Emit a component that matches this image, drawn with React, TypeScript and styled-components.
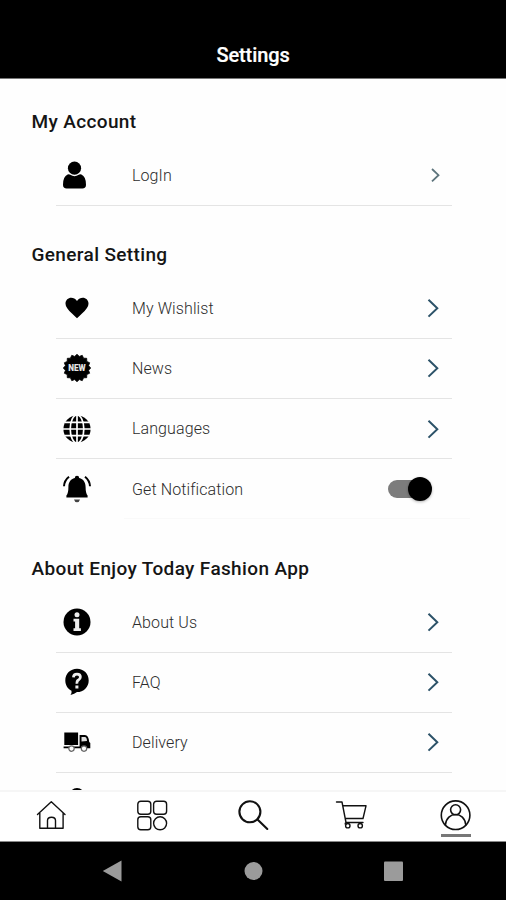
import React from "react";
import styled, { createGlobalStyle } from "styled-components";

const GlobalStyle = createGlobalStyle`
  * { box-sizing: border-box; }
  body { margin: 0; background: #fefefe; font-family: Roboto, "Liberation Sans", sans-serif; }
`;

const Screen = styled.div`
  display: flex;
  flex-direction: column;
  height: 900px;
  overflow: hidden;
  background: #fefefe;
`;

const Header = styled.header`
  flex: none;
  height: 79px;
  padding-top: 43px;
  background: #000;
  border-bottom: 1px solid #777;
  color: #fff;
  font-size: 20px;
  font-weight: 500;
  line-height: 24px;
  letter-spacing: -0.1px;
  text-align: center;
  -webkit-text-stroke: 0.2px #fff;
`;

const Content = styled.main`
  flex: 1;
  min-height: 0;
  overflow: hidden;
  padding-top: 31px;
`;

const Section = styled.section`
  margin-bottom: 37.5px;
`;

const Title = styled.h2`
  margin: 0 0 11.5px 31.5px;
  font-size: 19px;
  font-weight: 500;
  line-height: 24px;
  letter-spacing: 0.36px;
  color: #151515;
`;

const Row = styled.div<{ $line?: boolean }>`
  display: flex;
  align-items: center;
  width: 396px;
  height: 60.18px;
  margin-left: 56px;
  padding: 0 10px 0 6px;
  border-bottom: ${(p) => (p.$line === false ? "0" : "1px solid #e4e4e4")};
`;

const FaintLine = styled.div`
  height: 1px;
  margin: -1px 36px 0 124px;
  background: #f9f9f9;
`;

const Icon = styled.svg`
  flex: none;
  width: 30px;
  height: 30px;
  margin-right: 40px;
`;

const Label = styled.span`
  flex: 1;
  padding-top: 1.4px;
  font-size: 16px;
  font-weight: 300;
  line-height: 22px;
  letter-spacing: 0.1px;
  color: #2c2c2c;
`;

const Arrow = styled.svg<{ $small?: boolean }>`
  flex: none;
  width: 20px;
  height: 20px;
  stroke: ${(p) => (p.$small ? "#5d747c" : "#2c5268")};
`;

const Switch = styled.div`
  position: relative;
  width: 39px;
  height: 18px;
  margin-right: 15px;
  border-radius: 9px;
  background: #7c7c7c;
`;

const Thumb = styled.div`
  position: absolute;
  right: -5px;
  top: -3px;
  width: 24px;
  height: 24px;
  border-radius: 50%;
  background: #000;
  box-shadow: 0 1px 3px rgba(0, 0, 0, 0.3);
`;

const TabBar = styled.nav`
  flex: none;
  display: grid;
  grid-template-columns: repeat(5, 1fr);
  height: 52px;
  padding-top: 8px;
  border-top: 2px solid #f6f6f6;
  border-bottom: 1px solid #888;
  background: #fff;
`;

const Tab = styled.div`
  display: flex;
  flex-direction: column;
  align-items: center;
  gap: 3px;
`;

const TabIcon = styled.svg<{ $stroke?: number }>`
  width: 32px;
  height: 31px;
  overflow: visible;
  fill: none;
  stroke: #111;
  stroke-width: ${(p) => p.$stroke ?? 1.4};
  stroke-linejoin: round;
  stroke-linecap: round;
`;

const Underline = styled.div`
  width: 30px;
  height: 3px;
  margin-left: 1px;
  background: #777;
`;

const SystemBar = styled.footer`
  flex: none;
  display: grid;
  grid-template-columns: 182px 142px 182px;
  height: 58px;
  padding-top: 18px;
  background: #000;
`;

const SystemKey = styled.svg<{ $align: "start" | "center" | "end" }>`
  width: 22px;
  height: 24px;
  justify-self: ${(p) => p.$align};
  margin-left: ${(p) => (p.$align === "start" ? "58px" : "0")};
  margin-right: ${(p) => (p.$align === "end" ? "58px" : "0")};
  fill: #9b9b9b;
`;

const Chevron = ({ small }: { small?: boolean }) => (
  <Arrow viewBox="0 0 20 20" fill="none" strokeWidth={small ? 1.8 : 2} $small={small}>
    <path d={small ? "M10 4l6.5 6.2L10 16.4" : "M6.5 1.8l8.8 8.4-8.8 8.4"} />
  </Arrow>
);

const starburst = Array.from({ length: 32 }, (_, i) => {
  const r = i % 2 ? 11.8 : 13.7;
  const a = (i * Math.PI) / 16;
  return `${(15 + r * Math.cos(a)).toFixed(2)},${(15 + r * Math.sin(a)).toFixed(2)}`;
}).join(" ");

const UserIcon = () => (
  <Icon viewBox="0 0 30 30">
    <circle cx="12.5" cy="8.2" r="6.6" />
    <path d="M5.6 14.6q1.5-.7 2.7.2q4.2 2.8 8.4 0q1.2-.9 2.7-.2q4.6 2.1 4.6 10.1q0 3.8-3.7 3.8H4.7Q1 28.5 1 24.7q0-8 4.6-10.1z" />
  </Icon>
);

const HeartIcon = () => (
  <Icon viewBox="0 0 30 30">
    <path d="M15 25.3Q12.8 23.4 10 20.6Q3.5 14.5 3.5 10.7C3.5 4.3 11.3 2.6 15 8C18.7 2.6 26.5 4.3 26.5 10.7Q26.5 14.5 20 20.6Q17.2 23.4 15 25.3z" />
  </Icon>
);

const NewIcon = () => (
  <Icon viewBox="0 0 30 30">
    <polygon points={starburst} stroke="#000" strokeWidth=".8" strokeLinejoin="round" />
    <text
      x="15"
      y="18.3"
      textAnchor="middle"
      fontFamily="Roboto"
      fontSize="9"
      fontWeight="900"
      fill="#e4e4e4"
      textLength="17.5"
      lengthAdjust="spacingAndGlyphs"
    >
      NEW
    </text>
  </Icon>
);

const GlobeIcon = () => (
  <Icon viewBox="0 0 30 30">
    <circle cx="15" cy="15" r="13.6" />
    <g fill="none" stroke="#fff" strokeWidth="1.7">
      <path d="M15 1v28M1 15h28M3 8.3h24M3 21.7h24" />
      <ellipse cx="15" cy="15" rx="6.8" ry="14" />
    </g>
  </Icon>
);

const BellIcon = () => (
  <Icon viewBox="0 0 30 30">
    <path d="M15 1.7q2.2 0 2.2 2.3C21.5 5 23.6 8.5 23.6 13q0 6.5 2 8.5v2H4.4v-2q2-2 2-8.5C6.4 8.5 8.5 5 12.8 4Q12.8 1.7 15 1.7z" />
    <path d="M12 25.4h6Q17.3 28.2 15 28.2T12 25.4z" fill="#444" />
    <path d="M7 2.8Q2.3 6.5 2 12.3M23 2.8Q27.7 6.5 28 12.3" fill="none" stroke="#000" strokeWidth="2" />
  </Icon>
);

const InfoIcon = () => (
  <Icon viewBox="0 0 30 30">
    <circle cx="15" cy="15" r="13.5" />
    <circle cx="15" cy="7.7" r="2.5" fill="#eee" />
    <path d="M11.5 11.7h5.7v9.5h1.7v2.7h-7.4v-2.7h1.6v-6.7h-1.6z" fill="#eee" />
  </Icon>
);

const FaqIcon = () => (
  <Icon viewBox="0 0 30 30">
    <path d="M15 1.8C8.3 1.8 3.3 6.9 3.3 13.4c0 4.6 2.5 8.3 6.2 10.3q.5 2-1 4.2q4-.5 6.5-2.8C21.7 25.1 26.7 20 26.7 13.4S21.7 1.8 15 1.8z" />
    <path d="M11.4 10.3Q11.6 7.2 15 7.2t3.4 2.9Q18.4 12 16.5 13T15 16.7" fill="none" stroke="#eee" strokeWidth="2.7" />
    <rect x="13.4" y="18.5" width="3" height="3" fill="#eee" />
  </Icon>
);

const TruckIcon = () => (
  <Icon viewBox="0 0 30 30">
    <path d="M2.3 5.6h13.8v12.5H2.3zM1.6 19.5h16V8.1h5.3q3.7 0 4.3 7l1.1.8v5.4H1.6z" />
    <path d="M19.5 10.1h3.3q2 0 2.2 4l-5.5.5z" fill="#ddd" />
    <g fill="#fff" stroke="#666" strokeWidth="1.2">
      <circle cx="9.5" cy="21.6" r="2.7" />
      <circle cx="22" cy="21.6" r="2.7" />
    </g>
  </Icon>
);

const RoundIcon = () => (
  <Icon viewBox="0 0 30 30">
    <circle cx="15" cy="8.7" r="7.7" />
  </Icon>
);

type Item = { label: string; icon: React.FC; small?: boolean; toggle?: boolean };

const sections: { title: string; items: Item[] }[] = [
  { title: "My Account", items: [{ label: "LogIn", icon: UserIcon, small: true }] },
  {
    title: "General Setting",
    items: [
      { label: "My Wishlist", icon: HeartIcon },
      { label: "News", icon: NewIcon },
      { label: "Languages", icon: GlobeIcon },
      { label: "Get Notification", icon: BellIcon, toggle: true },
    ],
  },
  {
    title: "About Enjoy Today Fashion App",
    items: [
      { label: "About Us", icon: InfoIcon },
      { label: "FAQ", icon: FaqIcon },
      { label: "Delivery", icon: TruckIcon },
      { label: "", icon: RoundIcon },
    ],
  },
];

export default function App() {
  return (
    <>
      <GlobalStyle />
      <Screen>
        <Header>Settings</Header>
        <Content>
          {sections.map((section) => (
            <Section key={section.title}>
              <Title>{section.title}</Title>
              {section.items.map(({ label, icon: Glyph, small, toggle }) => (
                <React.Fragment key={label}>
                  <Row $line={!toggle}>
                    <Glyph />
                    <Label>{label}</Label>
                    {toggle ? (
                      <Switch>
                        <Thumb />
                      </Switch>
                    ) : (
                      <Chevron small={small} />
                    )}
                  </Row>
                  {toggle && <FaintLine />}
                </React.Fragment>
              ))}
            </Section>
          ))}
        </Content>
        <TabBar>
          <Tab>
            <TabIcon viewBox="0 0 32 31">
              <path d="M2.5 14.5L16.3 1.8l13.7 12.7M4.8 13V28.3h23.3V13M12.5 28.3V20.5Q12.5 17.3 16.5 17.3t4 3.2v7.8" />
            </TabIcon>
          </Tab>
          <Tab>
            <TabIcon viewBox="0 0 32 31">
              <rect x="1.8" y="1.2" width="13" height="13" rx="3" />
              <rect x="17.6" y="1.2" width="13" height="13" rx="3" />
              <rect x="1.8" y="16.8" width="13" height="13" rx="3" />
              <circle cx="24.1" cy="23.3" r="6.5" />
            </TabIcon>
          </Tab>
          <Tab>
            <TabIcon viewBox="0 0 32 31" $stroke={2.1}>
              <circle cx="12.9" cy="11.8" r="10.5" />
              <path d="M20.5 19.4l9.8 9.6" />
            </TabIcon>
          </Tab>
          <Tab>
            <TabIcon viewBox="0 0 32 31">
              <path d="M-1.5 2H4L8 22.5H25M5 5.8H28L25 18.5H7.2M8.5 22.5Q7 22.5 7.3 24" />
              <circle cx="9.8" cy="25.7" r="2.2" />
              <circle cx="22.2" cy="25.7" r="2.2" />
            </TabIcon>
          </Tab>
          <Tab>
            <TabIcon viewBox="0 0 32 31" $stroke={1.6}>
              <circle cx="16.6" cy="15.2" r="14.3" />
              <circle cx="16.6" cy="9.8" r="5" />
              <path d="M6.4 25C7.5 11 25.7 11 26.8 25" />
            </TabIcon>
            <Underline />
          </Tab>
        </TabBar>
        <SystemBar>
          <SystemKey $align="end" viewBox="0 0 22 24">
            <path d="M.8 11L19.5 .5v21z" />
          </SystemKey>
          <SystemKey $align="center" viewBox="0 0 22 24">
            <circle cx="11.5" cy="11" r="9" />
          </SystemKey>
          <SystemKey $align="start" viewBox="0 0 22 24">
            <rect x="2" y="1.5" width="19" height="19.5" rx="1" />
          </SystemKey>
        </SystemBar>
      </Screen>
    </>
  );
}
